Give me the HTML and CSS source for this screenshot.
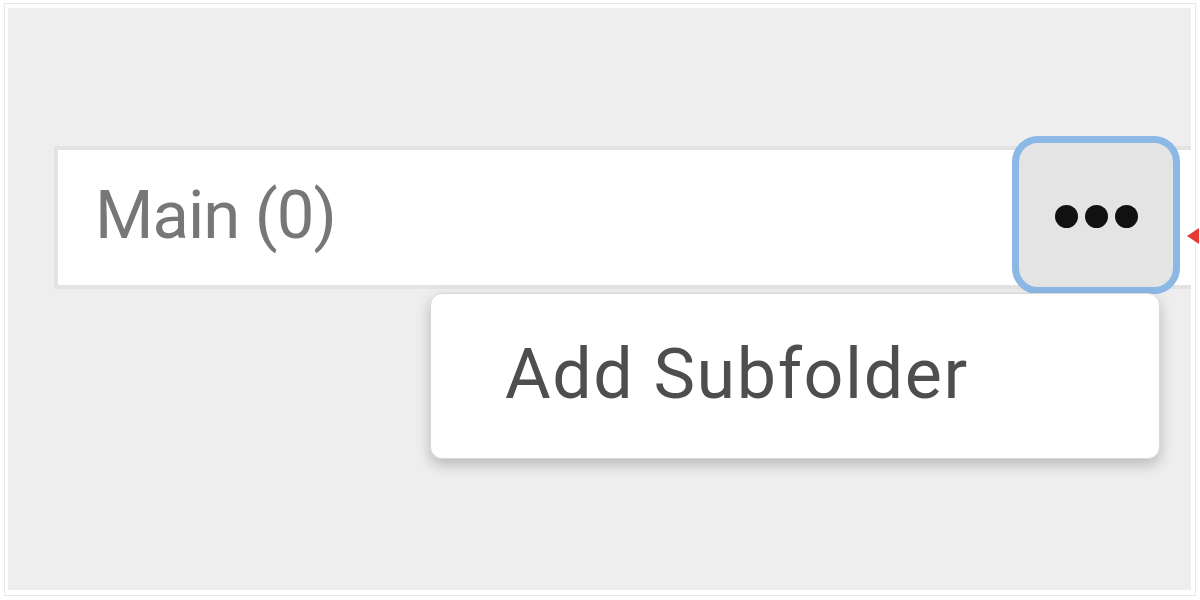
FILE: index.html
```html
<!DOCTYPE html>
<html>
<head>
<meta charset="utf-8">
<link rel="stylesheet" href="styles.css">
</head>
<body>
<div class="frame">
  <div class="panel">
    <div class="field">
      <span class="label">Main (0)</span>
      <div class="actions">
        <button class="more" type="button" aria-label="More">
          <span class="dot"></span><span class="dot"></span><span class="dot"></span>
        </button>
        <div class="menu">
          <div class="menu-item">Add Subfolder</div>
        </div>
      </div>
      <span class="marker"></span>
    </div>
  </div>
</div>
</body>
</html>
```
FILE: styles.css
```css
html, body {
  margin: 0;
  padding: 0;
  background: #ffffff;
}
body {
  font-family: Roboto, "Liberation Sans", Arial, sans-serif;
  height: 600px;
  overflow: hidden;
}
.frame {
  box-sizing: border-box;
  margin: 3px 4px 0 4px;
  height: 593px;
  border: 1px solid #e8e8e8;
  padding: 4px 4px 5px 3px;
}
.panel {
  box-sizing: border-box;
  height: 100%;
  background: #eeeeee;
  padding: 138px 0 0 46px;
}
.field {
  position: relative;
  box-sizing: border-box;
  height: 143px;
  display: flex;
  align-items: center;
  background: #ffffff;
  border: 4px solid #e3e3e3;
  border-right: none;
  filter: blur(0.7px);
}
.label {
  padding-left: 37px;
  padding-bottom: 6px;
  font-size: 67px;
  color: #777777;
  letter-spacing: -1px;
}
.actions {
  position: relative;
  margin-left: auto;
  margin-right: 11px;
  margin-top: -6px;
}
.more {
  box-sizing: border-box;
  width: 168px;
  height: 158px;
  display: flex;
  align-items: center;
  justify-content: center;
  gap: 7px;
  background: #e4e4e4;
  border: 7px solid #8cb8e6;
  border-radius: 26px;
  padding: 4px 0 0 0;
  margin: 0;
}
.dot {
  width: 23px;
  height: 23px;
  border-radius: 50%;
  background: #111111;
}
.menu {
  position: absolute;
  top: 157px;
  right: 20px;
  box-sizing: border-box;
  width: 730px;
  height: 166px;
  background: #ffffff;
  border: 1px solid #d8d8d8;
  border-radius: 12px;
  box-shadow: 0 6px 14px rgba(0, 0, 0, 0.22);
  display: flex;
  align-items: center;
}
.menu-item {
  padding-left: 74px;
  padding-bottom: 4px;
  font-size: 70px;
  color: #4e4e4e;
  letter-spacing: 1.6px;
}
.marker {
  position: absolute;
  left: calc(100% - 4px);
  top: 78px;
  width: 0;
  height: 0;
  border-top: 8px solid transparent;
  border-bottom: 8px solid transparent;
  border-right: 12px solid #e53935;
}
```
